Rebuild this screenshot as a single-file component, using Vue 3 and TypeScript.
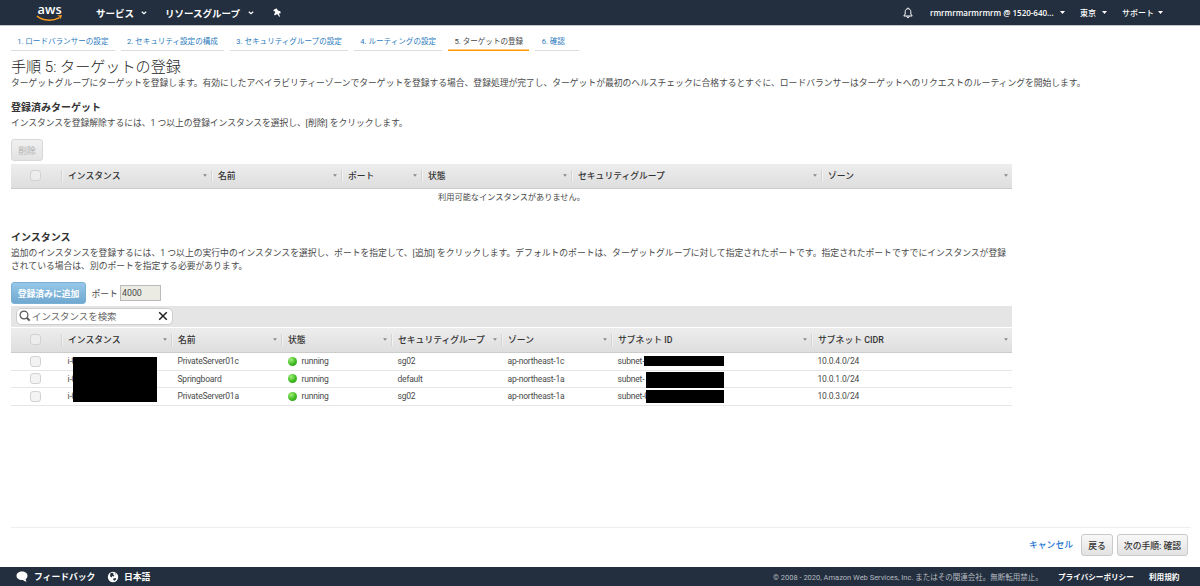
<script setup lang="ts">
interface Column {
  label: string
  width: number
}

interface Instance {
  id: string
  name: string
  state: string
  group: string
  zone: string
  subnet: string
  cidr: string
}

const steps: string[] = [
  '1. ロードバランサーの設定',
  '2. セキュリティ設定の構成',
  '3. セキュリティグループの設定',
  '4. ルーティングの設定',
  '5. ターゲットの登録',
  '6. 確認',
]
const currentStep = 4

const targetColumns: Column[] = [
  { label: 'インスタンス', width: 150 },
  { label: '名前', width: 130 },
  { label: 'ポート', width: 80 },
  { label: '状態', width: 150 },
  { label: 'セキュリティグループ', width: 250 },
  { label: 'ゾーン', width: 191 },
]

const instanceColumns: Column[] = [
  { label: 'インスタンス', width: 110 },
  { label: '名前', width: 110 },
  { label: '状態', width: 110 },
  { label: 'セキュリティグループ', width: 110 },
  { label: 'ゾーン', width: 110 },
  { label: 'サブネット ID', width: 200 },
  { label: 'サブネット CIDR', width: 201 },
]

const instances: Instance[] = [
  { id: 'i-0', name: 'PrivateServer01c', state: 'running', group: 'sg02', zone: 'ap-northeast-1c', subnet: 'subnet-', cidr: '10.0.4.0/24' },
  { id: 'i-0', name: 'Springboard', state: 'running', group: 'default', zone: 'ap-northeast-1a', subnet: 'subnet-', cidr: '10.0.1.0/24' },
  { id: 'i-0', name: 'PrivateServer01a', state: 'running', group: 'sg02', zone: 'ap-northeast-1a', subnet: 'subnet-0', cidr: '10.0.3.0/24' },
]

const tracks = (columns: Column[]): string => ['50px', ...columns.map((c) => `${c.width}px`)].join(' ')
</script>

<template>
  <div class="page">
    <header class="nav">
      <svg class="logo" viewBox="0 0 28 24">
        <text x="1.6" y="12.6" textLength="24" lengthAdjust="spacingAndGlyphs">aws</text>
        <path d="M1.4 15.4 C7 19.8 16.5 20.4 23 16.8" fill="none" stroke="#f79a1e" stroke-width="1.5" stroke-linecap="round" />
        <path d="M21.2 14.6 L26 14.1 L24.6 18.6 L23.8 16 Z" fill="#f79a1e" />
      </svg>
      <div class="menu services">サービス<svg class="chev" viewBox="0 0 6 4"><path d="M.8 .8 L3 2.8 L5.2 .8" /></svg></div>
      <div class="menu groups">リソースグループ<svg class="chev" viewBox="0 0 6 4"><path d="M.8 .8 L3 2.8 L5.2 .8" /></svg></div>
      <svg class="pin" viewBox="0 0 10 10"><path d="M2.8 .9 L4.8 .5 L5.9 2.4 L8.3 3.2 L8.7 5.3 L6.9 5.5 L8 8.6 L7.2 8.7 L5.2 6.1 L2.7 7.6 L2.1 5.9 L3.3 4.2 L2.7 3.2 L1 3.1 Z" fill="#fff" /></svg>
      <div class="account">
        <svg class="bell" viewBox="0 0 10 12"><path d="M.8 9 H9.2 L7.8 7 V4.6 C7.8 2.8 6.6 1.7 5 1.7 S2.2 2.8 2.2 4.6 V7 Z M5 1.7 V.6 M3.8 9.4 C3.9 11.2 6.1 11.2 6.2 9.4" /></svg>
        <span class="user">rmrmrmarmrmrm @ 1520-640...</span><i class="caret"></i>
        <span class="region">東京</span><i class="caret"></i>
        <span class="support">サポート</span><i class="caret"></i>
      </div>
    </header>

    <main class="content">
      <nav class="steps">
        <a v-for="(step, i) in steps" :key="step" :class="{ active: i === currentStep }">{{ step }}</a>
      </nav>
      <h1>手順 5: ターゲットの登録</h1>
      <p class="text intro">ターゲットグループにターゲットを登録します。有効にしたアベイラビリティーゾーンでターゲットを登録する場合、登録処理が完了し、ターゲットが最初のヘルスチェックに合格するとすぐに、ロードバランサーはターゲットへのリクエストのルーティングを開始します。</p>

      <section class="registered">
        <h2>登録済みターゲット</h2>
        <p class="text">インスタンスを登録解除するには、1 つ以上の登録インスタンスを選択し、[削除] をクリックします。</p>
        <button class="btn remove" disabled>削除</button>
        <div class="row head" :style="{ gridTemplateColumns: tracks(targetColumns) }">
          <div class="check"><i class="box"></i></div>
          <div v-for="c in targetColumns" :key="c.label" class="th">{{ c.label }}<i class="sort"></i></div>
        </div>
        <div class="empty">利用可能なインスタンスがありません。</div>
      </section>

      <section class="available">
        <h2>インスタンス</h2>
        <p class="text">追加のインスタンスを登録するには、1 つ以上の実行中のインスタンスを選択し、ポートを指定して、[追加] をクリックします。デフォルトのポートは、ターゲットグループに対して指定されたポートです。指定されたポートですでにインスタンスが登録<br>されている場合は、別のポートを指定する必要があります。</p>
        <div class="add">
          <button class="btn primary">登録済みに追加</button>
          <span class="port-label">ポート</span>
          <span class="port">4000</span>
        </div>
        <div class="toolbar">
          <div class="search">
            <svg class="lens" viewBox="0 0 12 12"><circle cx="5" cy="5" r="3.9" /><path d="M7.8 7.8 L10.6 10.6" stroke-width="2" /></svg>
            <span>インスタンスを検索</span>
            <svg class="clear" viewBox="0 0 10 10"><path d="M1.2 1.2 L8.8 8.8 M8.8 1.2 L1.2 8.8" /></svg>
          </div>
        </div>
        <div class="row head second" :style="{ gridTemplateColumns: tracks(instanceColumns) }">
          <div class="check"><i class="box"></i></div>
          <div v-for="c in instanceColumns" :key="c.label" class="th">{{ c.label }}<i class="sort"></i></div>
        </div>
        <div class="body">
          <div v-for="(item, i) in instances" :key="i" class="row item" :style="{ gridTemplateColumns: tracks(instanceColumns) }">
            <div class="check"><i class="box"></i></div>
            <div class="td">{{ item.id }}</div>
            <div class="td">{{ item.name }}</div>
            <div class="td"><i class="dot"></i>{{ item.state }}</div>
            <div class="td">{{ item.group }}</div>
            <div class="td">{{ item.zone }}</div>
            <div class="td">{{ item.subnet }}</div>
            <div class="td">{{ item.cidr }}</div>
          </div>
          <i class="mask ids"></i>
          <i class="mask subnet-a"></i>
          <i class="mask subnet-b"></i>
          <i class="mask subnet-c"></i>
        </div>
      </section>

      <div class="actions">
        <a class="cancel">キャンセル</a>
        <button class="btn back">戻る</button>
        <button class="btn next">次の手順: 確認</button>
      </div>
    </main>

    <footer class="footer">
      <svg class="bubble" viewBox="0 0 12 11"><path d="M6 .5 C9.2 .5 11.5 2.3 11.5 4.8 C11.5 6.1 10.9 7.3 9.7 8.1 C9.7 9.1 10 9.9 10.8 10.6 C9.5 10.6 8 10 7 8.9 L6 9 C2.8 9 .5 7.3 .5 4.8 C.5 2.3 2.8 .5 6 .5 Z" fill="#fff" /></svg>
      <b class="feedback">フィードバック</b>
      <svg class="globe" viewBox="0 0 12 12"><circle cx="6" cy="6" r="5.2" fill="#fff" /><path d="M3.2 2.6 L5.2 1.8 L6.6 2.6 L6.2 4 L7.6 4.6 L6.4 5.6 L5.2 5 L4.9 6.4 L3.2 5.4 Z M8 2 L9.4 3.2 L8.6 3.6 Z M6.3 7.4 L8.8 7 L9.2 8.2 L7.2 9.8 L6.2 9 Z" fill="#232f3e" /></svg>
      <b class="language">日本語</b>
      <span class="copyright">© 2008 - 2020, Amazon Web Services, Inc. またはその関連会社。無断転用禁止。</span>
      <b class="privacy">プライバシーポリシー</b>
      <b class="terms">利用規約</b>
    </footer>
  </div>
</template>

<style>
body {
  margin: 0;
  background: #fff;
}
</style>

<style scoped>
.page {
  width: 1200px;
  height: 586px;
  display: flex;
  flex-direction: column;
  overflow: hidden;
  color: #4a4a4a;
  font-family: Roboto, "Noto Sans CJK JP", sans-serif;
  font-size: 8.8px;
  white-space: nowrap;
}
.page * {
  box-sizing: border-box;
}
svg {
  display: block;
  flex: none;
}
h1, h2, p {
  margin: 0;
}

.nav {
  height: 26px;
  flex: none;
  display: flex;
  align-items: center;
  padding-left: 36px;
  background: #232f3e;
  border-bottom: 1px solid #c5c9ce;
  color: #fff;
}
.logo {
  width: 28px;
  height: 24px;
  overflow: visible;
}
.logo text {
  fill: #fff;
  font: 600 13px "Open Sans", sans-serif;
}
.menu {
  display: flex;
  align-items: center;
  font-weight: 700;
  font-size: 9.5px;
}
.services {
  width: 69px;
  margin-left: 32px;
}
.groups {
  width: 107px;
}
.chev {
  width: 6px;
  height: 4px;
  margin-left: 7px;
  fill: none;
  stroke: #fff;
  stroke-width: 1.2;
}
.groups .chev {
  margin-left: 8px;
}
.pin {
  width: 10px;
  height: 10px;
}
.account {
  margin-left: auto;
  display: flex;
  align-items: center;
  padding-right: 37px;
  font-size: 8px;
  font-weight: 500;
}
.bell {
  width: 10px;
  height: 12px;
  margin-right: 17px;
  fill: none;
  stroke: #fff;
  stroke-width: 1;
}
.user {
  width: 124px;
  font-family: "Open Sans", sans-serif;
  font-weight: 600;
}
.region {
  width: 16px;
  margin-left: 15px;
}
.support {
  width: 31px;
  margin-left: 15px;
}
.caret, .sort {
  width: 5px;
  height: 3px;
  background: #fff;
  clip-path: polygon(0 0, 100% 0, 50% 100%);
}
.caret {
  margin-left: 6px;
}
.support + .caret {
  margin-left: 5px;
}

.content {
  flex: 1;
  display: flex;
  flex-direction: column;
  padding: 0 0 0 11px;
}
.steps {
  display: flex;
  gap: 6.3px;
  height: 25px;
  flex: none;
  align-items: flex-end;
  font-size: 7.57px;
}
.steps a {
  height: 19px;
  padding: 0 6px 0 6.2px;
  line-height: 19px;
  color: #2c7bbd;
  border-bottom: 1px solid #ddd;
}
.steps a:last-child {
  width: 44px;
}
.steps .active {
  color: #444;
  border-bottom: 1px solid #f90;
  box-shadow: inset 0 -0.5px #f90;
}
h1 {
  height: 24px;
  margin-top: 4px;
  line-height: 25px;
  font-size: 15.1px;
  font-weight: 300;
  color: #222;
}
.text {
  line-height: 13px;
}
.intro {
  margin-top: -2px;
  letter-spacing: -0.025px;
}
h2 {
  height: 15px;
  line-height: 16px;
  font-size: 10px;
  font-weight: 700;
  color: #333;
}
.registered {
  margin-top: 10px;
}
.registered .text {
  margin-top: 2px;
  letter-spacing: -0.06px;
}
.btn {
  height: 22px;
  padding: 0;
  display: block;
  border: 1px solid #cacaca;
  border-radius: 3px;
  background: linear-gradient(#f8f8f8, #e2e2e2);
  font: 500 8.8px Roboto, "Noto Sans CJK JP", sans-serif;
  color: #333;
}
.remove {
  width: 32px;
  margin-top: 9px;
  color: #bbb;
  border-color: #d8d8d8;
  background: linear-gradient(#f0f0f0, #e3e3e3);
}
.row {
  display: grid;
  width: 1001px;
}
.head {
  height: 25px;
  margin-top: 3px;
  padding-bottom: 1px;
  align-items: center;
  background: linear-gradient(#ededed, #dedede);
  border-bottom: 1px solid #ccc;
  font-weight: 500;
  color: #333;
}
.second {
  margin-top: 1px;
}
.check {
  padding-left: 19px;
}
.box {
  display: block;
  width: 11px;
  height: 11px;
  border: 1px solid #d2d2d2;
  border-radius: 3px;
  background: #f3f3f3;
}
.head .box {
  background: #ededed;
}
.th {
  height: 12px;
  display: flex;
  align-items: center;
  padding: 0 4px 0 6px;
  border-left: 1px solid #d4d4d4;
  box-shadow: inset 1px 0 #f2f2f2;
}
.sort {
  width: 4px;
  height: 2.5px;
  margin-left: auto;
  background: #888;
}
.empty {
  width: 1001px;
  height: 17px;
  line-height: 17px;
  font-size: 8.2px;
  text-align: center;
}
.available {
  margin-top: 24px;
}
.available .text {
  margin-top: 2px;
  letter-spacing: 0;
}
.add {
  display: flex;
  align-items: center;
  margin-top: 9px;
}
.primary {
  width: 75px;
  color: #fff;
  font-weight: 700;
  border-color: #7bb0d5;
  background: linear-gradient(#96c8e9, #70a8d0);
}
.port-label {
  width: 34px;
  padding-left: 5.5px;
}
.port {
  width: 41px;
  height: 16px;
  padding-left: 1px;
  line-height: 14px;
  border: 1px solid #bbb;
  background: #ebebe4;
}
.toolbar {
  width: 1001px;
  height: 21px;
  margin-top: 2px;
  padding: 2px 5px;
  background: #e5e5e5;
}
.search {
  width: 157px;
  height: 17px;
  display: flex;
  align-items: center;
  padding: 0 4px 1px 2px;
  border: 1px solid #ccc;
  border-radius: 5px;
  background: #fff;
  color: #666;
  font-size: 9.45px;
}
.lens {
  width: 12px;
  height: 12px;
  margin-right: 1px;
  fill: none;
  stroke: #555;
  stroke-width: 1.2;
}
.clear {
  width: 10px;
  height: 10px;
  margin-left: auto;
  fill: none;
  stroke: #222;
  stroke-width: 1.5;
}
.body {
  position: relative;
  width: 1001px;
}
.item {
  height: 17.5px;
  align-items: center;
  border-bottom: 1px solid #e6e6e6;
  font-size: 8.5px;
  letter-spacing: -0.19px;
}
.td {
  display: flex;
  align-items: center;
  padding-left: 6.5px;
}
.dot {
  width: 9px;
  height: 9px;
  margin: 0 5px 0 0;
  border-radius: 50%;
  background: radial-gradient(circle at 35% 30%, #a5ee7c, #45c025 50%, #228a12);
}
.mask {
  position: absolute;
  background: #000;
}
.ids { left: 62px; top: 4px; width: 84px; height: 44.5px; }
.subnet-a { left: 632.5px; top: 3px; width: 80.5px; height: 10px; }
.subnet-b { left: 634.5px; top: 19px; width: 78.5px; height: 15.5px; }
.subnet-c { left: 635px; top: 36.5px; width: 78px; height: 13.5px; }

.actions {
  height: 40px;
  width: 1180px;
  margin-top: auto;
  display: flex;
  justify-content: flex-end;
  align-items: flex-start;
  padding: 6px 3px 0 0;
  border-top: 1px solid #eee;
}
.cancel {
  margin-right: 8px;
  line-height: 22px;
  font-weight: 500;
  color: #1a73d1;
}
.back {
  width: 32px;
  margin-right: 4px;
}
.next {
  width: 71px;
}

.footer {
  height: 19px;
  flex: none;
  display: flex;
  align-items: center;
  padding-left: 16px;
  background: #232f3e;
  color: #fff;
}
.bubble {
  width: 12px;
  height: 11px;
  margin-right: 6px;
}
.feedback {
  width: 73px;
}
.globe {
  width: 12px;
  height: 12px;
  margin-right: 5px;
}
.copyright {
  width: 285px;
  margin-left: auto;
  font-size: 7.5px;
  color: #b5bac0;
}
.privacy {
  width: 91px;
  font-size: 7.6px;
}
.terms {
  width: 51px;
  font-size: 7.6px;
}
</style>
